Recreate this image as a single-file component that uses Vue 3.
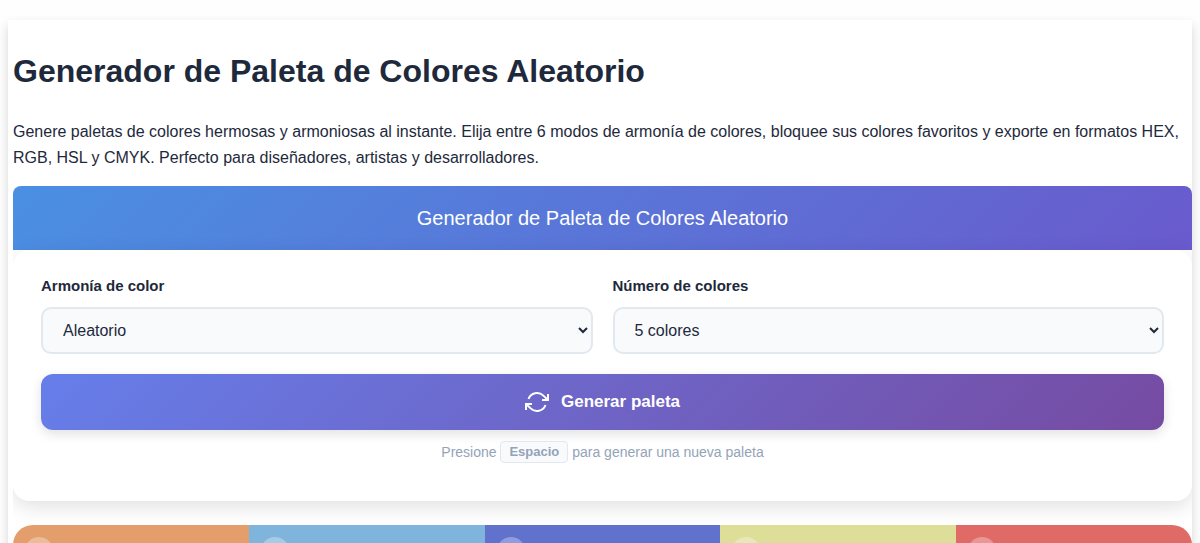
<script setup>
import { ref } from 'vue'

const harmony = ref('Aleatorio')
const count = ref(5)
const harmonies = ['Aleatorio', 'Análogo', 'Monocromático', 'Complementario', 'Triádico', 'Tetrádico']
const counts = [3, 4, 5, 6, 7, 8]
const colors = ref(['#e49e6b', '#7fb5dd', '#6172cc', '#dddf99', '#e06a66'])

function generate() {
  colors.value = Array.from({ length: count.value }, () => `hsl(${Math.floor(Math.random() * 360)}, 60%, 65%)`)
}
</script>

<template>
  <main class="page">
    <h1>Generador de Paleta de Colores Aleatorio</h1>
    <p class="intro">
      Genere paletas de colores hermosas y armoniosas al instante. Elija entre 6 modos de armonía de colores, bloquee sus colores favoritos y exporte en formatos HEX, RGB, HSL y CMYK. Perfecto para diseñadores, artistas y desarrolladores.
    </p>
    <section class="tool">
      <div class="banner">Generador de Paleta de Colores Aleatorio</div>
      <div class="panel">
        <div class="fields">
          <div class="field">
            <label for="harmony">Armonía de color</label>
            <select id="harmony" v-model="harmony">
              <option v-for="h in harmonies" :key="h" :value="h">{{ h }}</option>
            </select>
          </div>
          <div class="field">
            <label for="count">Número de colores</label>
            <select id="count" v-model="count">
              <option v-for="n in counts" :key="n" :value="n">{{ n }} colores</option>
            </select>
          </div>
        </div>
        <button class="generate" type="button" @click="generate">
          <svg width="24" height="24" viewBox="0 0 24 24" fill="none" stroke="currentColor" stroke-width="2" aria-hidden="true">
            <path d="M23 4v6h-6M1 20v-6h6" />
            <path d="M3.51 9a9 9 0 0 1 14.85-3.36L23 10M1 14l4.64 4.36A9 9 0 0 0 20.49 15" />
          </svg>
          <span>Generar paleta</span>
        </button>
        <p class="hint">Presione <kbd>Espacio</kbd> para generar una nueva paleta</p>
      </div>
      <div class="palette">
        <div v-for="(c, i) in colors" :key="i" class="swatch" :style="{ background: c }">
          <button class="lock" type="button" :aria-label="`Bloquear color ${i + 1}`"></button>
        </div>
      </div>
    </section>
  </main>
</template>

<style>
body {
  background: #fefefe;
}
</style>

<style scoped>
.page {
  margin: 20px 8px 0;
  padding: 1px 0 0 5px;
  background: #fff;
  color: #1e293b;
  font: 16px/26px "Liberation Sans", Arial, sans-serif;
  box-shadow: 0 5px 10px rgba(0, 0, 0, 0.16);
}
h1 {
  margin: 24px 0 22px;
  font-size: 32px;
  line-height: 52px;
}
.intro {
  margin: 0 0 15px;
}
.tool {
  overflow: hidden;
  border-radius: 8px 8px 0 0;
}
.banner {
  padding: 16px;
  background: linear-gradient(135deg, #4a90e2, #6a5acd);
  color: #fff;
  font-size: 20px;
  line-height: 32px;
  text-align: center;
}
.panel {
  padding: 24px 28px 36px;
  margin-bottom: 24px;
  background: #fff;
  border-radius: 16px;
  box-shadow: 0 6px 20px rgba(0, 0, 0, 0.12);
}
.fields {
  display: grid;
  grid-template-columns: 1fr 1fr;
  gap: 20px;
  margin-bottom: 20px;
}
.field {
  display: flex;
  flex-direction: column;
  gap: 9px;
}
label {
  font-size: 15px;
  font-weight: 700;
  line-height: 24px;
}
select {
  width: 100%;
  height: 47px;
  padding: 0 0 0 16px;
  border: 2px solid #e2e8f0;
  border-radius: 10px;
  background: #f8fafc;
  color: #1e293b;
  font: inherit;
}
.generate {
  display: flex;
  align-items: center;
  justify-content: center;
  gap: 12px;
  width: 100%;
  height: 56px;
  border: 0;
  border-radius: 12px;
  background: linear-gradient(135deg, #667eea, #764ba2);
  box-shadow: 0 4px 12px rgba(0, 0, 0, 0.12);
  color: #fff;
  font: 700 17px/24px "Liberation Sans", Arial, sans-serif;
}
.hint {
  margin: 10px 0 0;
  color: #94a3b8;
  font-size: 14px;
  line-height: 25px;
  text-align: center;
}
kbd {
  display: inline-block;
  padding: 0 8px;
  border: 1px solid #e2e8f0;
  border-radius: 4px;
  background: #f8fafc;
  font: 700 13px/20px "Liberation Sans", Arial, sans-serif;
  vertical-align: 1px;
}
.palette {
  display: flex;
  min-height: 240px;
  overflow: hidden;
  border-radius: 20px;
}
.swatch {
  flex: 1;
  padding: 12px;
}
.lock {
  display: block;
  width: 28px;
  height: 28px;
  padding: 0;
  border: 0;
  border-radius: 50%;
  background: rgba(255, 255, 255, 0.3);
}
</style>
